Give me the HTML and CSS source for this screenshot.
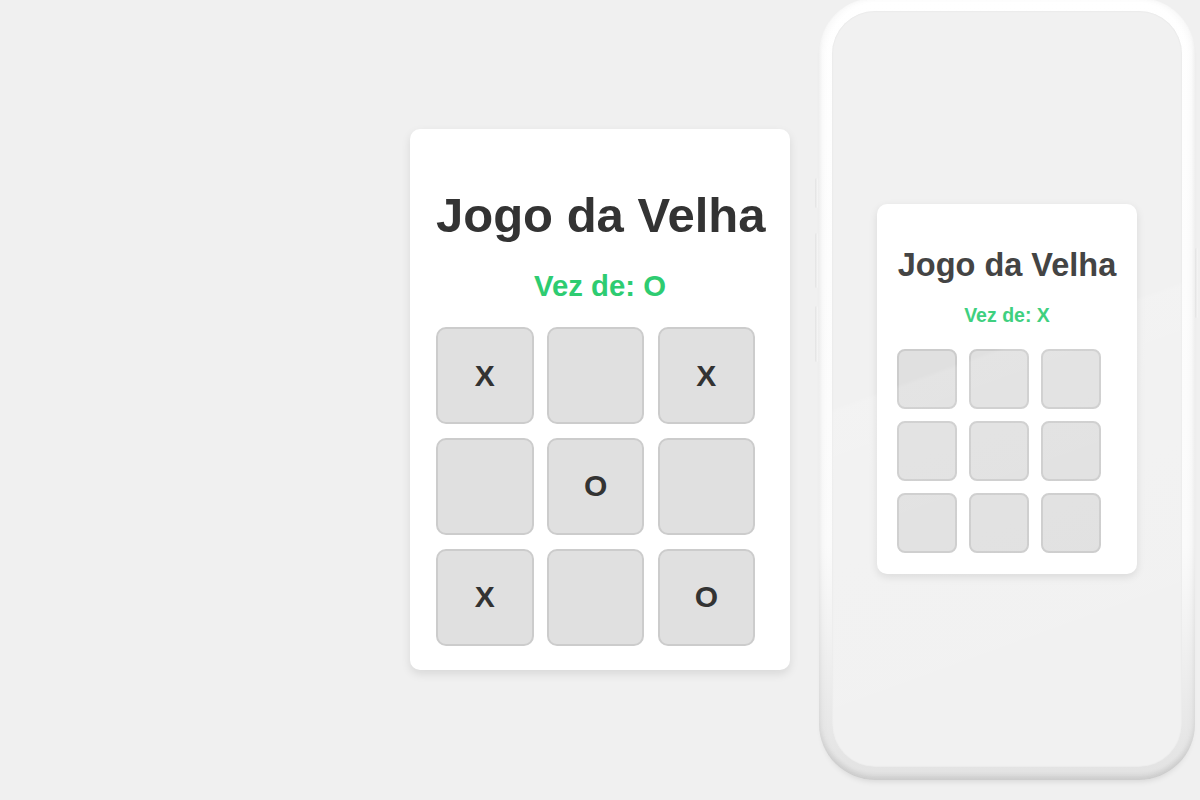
FILE: index.html
```html
<!DOCTYPE html>
<html lang="pt-BR">
<head>
<meta charset="utf-8">
<title>Jogo da Velha</title>
<link rel="stylesheet" href="styles.css">
</head>
<body>
<main class="stage">
  <section class="card">
    <h1 class="title">Jogo da Velha</h1>
    <p class="status">Vez de: O</p>
    <div class="board">
      <div class="cell">X</div>
      <div class="cell"></div>
      <div class="cell">X</div>
      <div class="cell"></div>
      <div class="cell">O</div>
      <div class="cell"></div>
      <div class="cell">X</div>
      <div class="cell"></div>
      <div class="cell">O</div>
    </div>
  </section>

  <div class="phone">
    <span class="btn btn-l1"></span>
    <span class="btn btn-l2"></span>
    <span class="btn btn-l3"></span>
    <span class="btn btn-r1"></span>
    <div class="screen">
      <section class="card card-sm">
        <h1 class="title title-sm">Jogo da Velha</h1>
        <p class="status status-sm">Vez de: X</p>
        <div class="board board-sm">
          <div class="cell cell-sm"></div>
          <div class="cell cell-sm"></div>
          <div class="cell cell-sm"></div>
          <div class="cell cell-sm"></div>
          <div class="cell cell-sm"></div>
          <div class="cell cell-sm"></div>
          <div class="cell cell-sm"></div>
          <div class="cell cell-sm"></div>
          <div class="cell cell-sm"></div>
        </div>
      </section>
      <div class="glare"></div>
    </div>
  </div>
</main>
</body>
</html>
```

FILE: styles.css
```css
* { box-sizing: border-box; }

html, body {
  margin: 0;
  padding: 0;
  background: #f0f0f0;
  font-family: "Liberation Sans", Arial, sans-serif;
  overflow: hidden;
}

.stage {
  width: 1200px;
  height: 800px;
  display: flex;
  align-items: flex-start;
  padding-left: 410px;
  gap: 29px;
}

.card {
  margin-top: 129px;
  width: 380px;
  background: #fff;
  border-radius: 10px;
  box-shadow: 0 4px 10px rgba(0, 0, 0, 0.1);
  padding: 59px 26px 24px;
  display: flex;
  flex-direction: column;
}

.title {
  margin: 0;
  font-size: 49px;
  font-weight: bold;
  color: #333;
  text-align: center;
  line-height: 54px;
  white-space: nowrap;
}

.status {
  margin: 28px 0 25px;
  font-size: 29.3px;
  font-weight: bold;
  color: #2ecc71;
  text-align: center;
  line-height: 32px;
}

.board {
  display: grid;
  grid-template-columns: repeat(3, 97.5px);
  grid-auto-rows: 97px;
  gap: 13.8px 13.3px;
}

.cell {
  background: #e0e0e0;
  border: 2px solid #cccccc;
  border-radius: 10px;
  display: flex;
  align-items: center;
  justify-content: center;
  font-size: 30px;
  font-weight: bold;
  color: #333;
}

/* phone mockup */
.phone {
  position: relative;
  margin-top: -2px;
  width: 376px;
  height: 782px;
  border-radius: 56px;
  padding: 13px;
  background: linear-gradient(180deg, #ffffff 0%, #fbfbfb 70%, #e2e2e2 100%);
  box-shadow:
    inset 0 -5px 4px rgba(0, 0, 0, 0.07),
    inset 4px 0 6px rgba(0, 0, 0, 0.03),
    inset -4px 0 6px rgba(0, 0, 0, 0.03),
    0 5px 6px -4px rgba(0, 0, 0, 0.12);
}

.btn {
  position: absolute;
  width: 3px;
  background: linear-gradient(90deg, #e2e2e2, #f7f7f7);
  border-radius: 2px;
}
.btn-l1 { left: -4px; top: 180px; height: 30px; }
.btn-l2 { left: -4px; top: 235px; height: 55px; }
.btn-l3 { left: -4px; top: 308px; height: 56px; }
.btn-r1 { right: -3px; top: 250px; height: 70px; }

.screen {
  position: relative;
  width: 100%;
  height: 100%;
  border-radius: 43px;
  background: #f1f1f1;
  box-shadow: inset 0 0 2px rgba(0, 0, 0, 0.08);
  display: flex;
  align-items: center;
  justify-content: center;
  overflow: hidden;
}

.glare {
  position: absolute;
  inset: 0;
  pointer-events: none;
  background: linear-gradient(160deg, rgba(255,255,255,0) 45%, rgba(255,255,255,0.12) 45.5%, rgba(255,255,255,0.05) 70%, rgba(255,255,255,0) 100%);
}

.card-sm {
  margin-top: 0;
  width: 260px;
  padding: 43px 20px 21px;
  border-radius: 10px;
  box-shadow: 0 3px 8px rgba(0, 0, 0, 0.1);
}

.title-sm {
  font-size: 32.5px;
  line-height: 36px;
  color: #444;
}

.status-sm {
  margin: 21px 0 23px;
  font-size: 19.5px;
  line-height: 22px;
  color: #3fd07f;
}

.board-sm {
  grid-template-columns: repeat(3, 60.4px);
  grid-auto-rows: 60px;
  gap: 12px 11.4px;
}

.cell-sm {
  border-radius: 8px;
}
```
